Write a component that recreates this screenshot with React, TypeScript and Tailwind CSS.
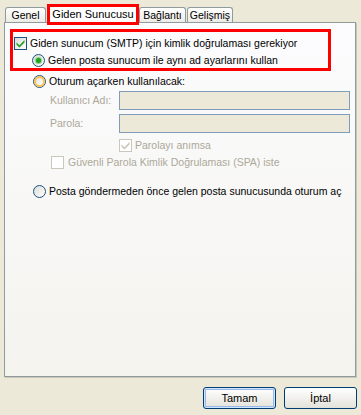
import React from 'react';

const Check = ({ color }: { color: string }) => (
    <svg width="9" height="9" viewBox="0 0 9 9" className="block">
        <path d="M0.5 3.5 L3.5 6.2 L8.5 1 L8.5 3.5 L3.5 8.5 L0.5 5.8 Z" fill={color} />
    </svg>
);

const CheckBox = ({ checked, disabled }: { checked?: boolean; disabled?: boolean }) => (
    <div
        className={
            disabled
                ? 'w-[13px] h-[13px] shrink-0 border border-[#CAC8BB] bg-white flex items-center justify-center'
                : 'w-[13px] h-[13px] shrink-0 border border-[#1C5180] bg-gradient-to-br from-[#DCDCD7] to-white flex items-center justify-center'
        }
    >
        {checked && <Check color={disabled ? '#CAC8BB' : '#21A121'} />}
    </div>
);

const Radio = ({ selected, hover }: { selected?: boolean; hover?: boolean }) => (
    <div className="w-[13px] h-[13px] shrink-0 rounded-full border border-[#1C5180] bg-gradient-to-br from-[#DCDCD7] to-white flex items-center justify-center">
        {hover && <div className="w-[11px] h-[11px] rounded-full border-2 border-[#F9C258] bg-gradient-to-br from-[#E6E5DC] to-white" />}
        {selected && <div className="w-[5px] h-[5px] rounded-full bg-[#21A121] shadow-[0_0_1px_1px_#7FD17F]" />}
    </div>
);

const Tab = ({ label, w }: { label: string; w: string }) => (
    <div className={`${w} h-[15px] border border-b-0 border-[#919B9C] rounded-t-[3px] bg-gradient-to-b from-white to-[#ECEBE6] flex items-center justify-center`}>
        {label}
    </div>
);

export default function App() {
    return (
        <div className="w-[361px] h-[415px] bg-[#ECE9D8] text-[10.5px] leading-[13px] text-black [font-family:Tahoma,'Liberation_Sans',Arial,sans-serif] flex flex-col pl-[4px] pr-[5px] pt-[4px] overflow-hidden">
            {/* Tabs */}
            <div className="flex items-end pl-[1px] h-[18px] relative z-10">
                <Tab label="Genel" w="w-[41px]" />
                <div className="h-[21px] -mb-[3px] ml-[1px] w-[92px] border-[3px] border-[#FF0000] bg-white flex items-center justify-center pb-[1px] text-[11px]">
                    Giden Sunucusu
                </div>
                <Tab label="Bağlantı" w="w-[47px]" />
                <div className="w-[1px]" />
                <Tab label="Gelişmiş" w="w-[46px]" />
            </div>

            {/* Panel */}
            <div className="h-[355px] border border-[#919B9C] shadow-[1px_1px_0_#C9C7BA] bg-gradient-to-b from-[#FCFCFE] to-[#F4F3EE] pt-[6px] pl-[5px] flex flex-col">
                <div className="w-[321px] border-[3px] border-[#FF0000] flex flex-col pt-[3px]">
                    <div className="h-[17px] flex items-center gap-[3px] pl-[1px]">
                        <CheckBox checked />
                        <span>Giden sunucum (SMTP) için kimlik doğrulaması gerekiyor</span>
                    </div>
                    <div className="h-[16px] flex items-center gap-[3px] pl-[19px]">
                        <Radio selected />
                        <span>Gelen posta sunucum ile aynı ad ayarlarını kullan</span>
                    </div>
                </div>

                <div className="mt-[2px] h-[16px] flex items-center gap-[3px] pl-[23px]">
                    <Radio hover />
                    <span>Oturum açarken kullanılacak:</span>
                </div>

                <div className="mt-[2px] flex flex-col text-[#ACA899]">
                    <div className="flex items-center h-[19px]">
                        <span className="pl-[40px]">Kullanıcı Adı:</span>
                        <div className="ml-auto mr-[5px] w-[231px] h-[19px] border border-[#7F9DB9] bg-[#ECE9D8]" />
                    </div>
                    <div className="mt-[4px] flex items-center h-[19px]">
                        <span className="pl-[40px]">Parola:</span>
                        <div className="ml-auto mr-[5px] w-[231px] h-[19px] border border-[#7F9DB9] bg-[#ECE9D8]" />
                    </div>
                    <div className="mt-[5px] h-[15px] flex items-center gap-[3px] pl-[109px]">
                        <CheckBox checked disabled />
                        <span>Parolayı anımsa</span>
                    </div>
                    <div className="mt-[2px] h-[15px] flex items-center gap-[4px] pl-[41px]">
                        <CheckBox disabled />
                        <span>Güvenli Parola Kimlik Doğrulaması (SPA) iste</span>
                    </div>
                </div>

                <div className="mt-[13px] h-[16px] flex items-center gap-[3px] pl-[23px]">
                    <Radio />
                    <span className="whitespace-nowrap">Posta göndermeden önce gelen posta sunucusunda oturum aç</span>
                </div>
            </div>

            {/* Buttons */}
            <div className="flex justify-end gap-[8px] mt-[10px] -mr-[1px]">
                <button className="w-[73px] h-[22px] rounded-[3px] border border-[#003C74] bg-gradient-to-b from-white to-[#E3E2DA] shadow-[inset_0_0_0_1px_#CEE7FF,inset_0_0_0_2px_#98B8EA] flex items-center justify-center text-[11px]">
                    Tamam
                </button>
                <button className="w-[73px] h-[22px] rounded-[3px] border border-[#003C74] bg-gradient-to-b from-white to-[#E3E2DA] flex items-center justify-center text-[11px]">
                    İptal
                </button>
            </div>
        </div>
    );
}
